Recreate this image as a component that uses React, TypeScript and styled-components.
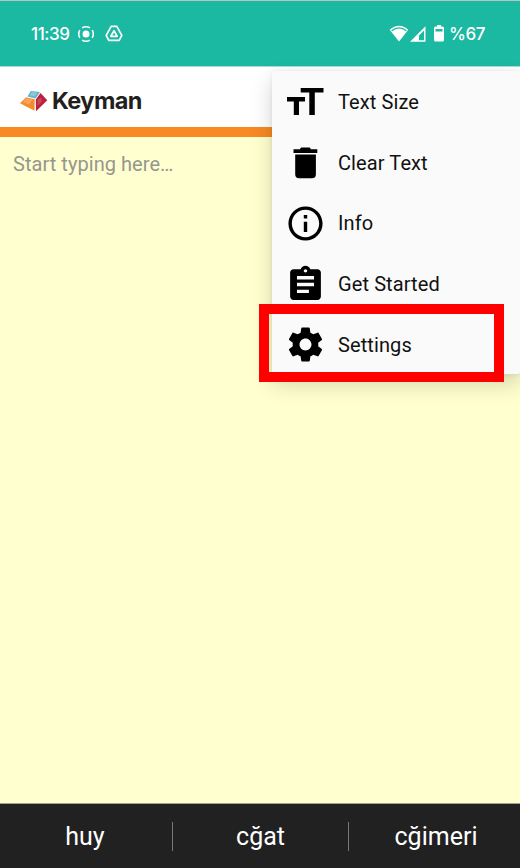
import React from "react";
import styled, { createGlobalStyle } from "styled-components";

const GlobalStyle = createGlobalStyle`
  * { box-sizing: border-box; }
  body { margin: 0; background: #ffffcf; }
  svg { display: block; flex: none; }
`;

const Screen = styled.div`
  position: relative;
  display: flex;
  flex-direction: column;
  width: 520px;
  height: 868px;
  overflow: hidden;
  font-family: Roboto, sans-serif;
`;

const StatusBar = styled.header`
  display: flex;
  justify-content: space-between;
  height: 67px;
  padding: 0 36px 0 31px;
  background: #1bb8a2;
  border-top: 1px solid #bcc4c3;
  border-bottom: 1px solid #a5ded6;
`;

const StatusGroup = styled.div`
  display: flex;
  align-items: center;
  color: #fff;
`;

const StatusText = styled.span<{ $width: number }>`
  width: ${(p) => p.$width}px;
  font: 500 17px/20px Inter, sans-serif;
  letter-spacing: -0.4px;
  white-space: nowrap;
`;

const AppBar = styled.div`
  display: flex;
  align-items: center;
  gap: 4px;
  height: 70px;
  padding: 7px 20px 0;
  background: #fff;
  border-bottom: 10px solid #f88923;
`;

const Brand = styled.span`
  font: 700 23.5px/30px Inter, sans-serif;
  letter-spacing: -0.6px;
  color: #231f20;
`;

const Editor = styled.main`
  flex: 1;
  padding: 15px 13px;
  background: #ffffcf;
  font-size: 20px;
  line-height: 24px;
  letter-spacing: 0.05px;
  color: #96968f;
`;

const Suggestions = styled.footer`
  display: flex;
  align-items: center;
  height: 65px;
  background: #212121;
  border-top: 1px solid #a3a38d;
`;

const Suggestion = styled.div<{ $width: number }>`
  width: ${(p) => p.$width}px;
  flex: none;
  height: 29px;
  padding-right: 2px;
  text-align: center;
  font-size: 25px;
  line-height: 30px;
  color: #fff;

  & + & {
    padding-right: 0;
    border-left: 1px solid #777;
  }
`;

const Menu = styled.nav`
  position: absolute;
  top: 71px;
  left: 272px;
  width: 248px;
  height: 303px;
  padding-top: 1px;
  background: #fafafa;
  border-radius: 2px;
  box-shadow: 0 10px 22px rgba(0, 0, 0, 0.17), 0 0 5px rgba(0, 0, 0, 0.08);
`;

const MenuItem = styled.div`
  display: flex;
  align-items: center;
  gap: 12px;
  height: 60.6px;
  padding-left: 13px;
  font-size: 20px;
  line-height: 24px;
  letter-spacing: 0.1px;
  color: #111;
`;

const Highlight = styled.div`
  position: absolute;
  top: 304px;
  left: 259px;
  width: 245px;
  height: 78px;
  border: 10px solid #f00;
`;

const KeymanLogo = () => (
  <svg width="28" height="22" viewBox="0 0 28 22">
    <path d="M10.700 1 20 2 15.500 8.500 7.500 6.500Z" fill="#63b3cb" />
    <path d="m11.500 2 6 .7-3 3.800-4.500-1Z" fill="#8cc9d8" />
    <path d="M6 7.200 14.700 9.200 14.500 20.700 0 13.300Z" fill="#f68b2c" />
    <path d="m6.500 8 6 1.500-3.500 5-6-2.500Z" fill="#f8a560" />
    <path d="M20.500 3 27.300 10.300 16 21.200 15.800 9.500Z" fill="#b9223b" />
    <path d="m17.500 9.500 3.500-2 1 4-4.500 4.500Z" fill="#ca4557" />
  </svg>
);

const CastIcon = () => (
  <svg width="18" height="18" viewBox="0 0 18 18" fill="none">
    <circle cx="9" cy="9" r="3.5" fill="currentColor" />
    <circle cx="9" cy="9" r="7.3" stroke="currentColor" strokeWidth="1.6" pathLength="100" strokeDasharray="18 7" strokeDashoffset="9" />
  </svg>
);

const DriveIcon = () => (
  <svg width="18" height="17" viewBox="0 0 18 17" fill="none" stroke="currentColor" strokeWidth="1.7" strokeLinejoin="round">
    <path d="M6.2 1.4h5.6l5 9-2.600 5H3.800l-2.600-5Z" />
    <path d="m9 5.800 3.200 5.500H5.800Z" />
  </svg>
);

const WifiIcon = () => (
  <svg width="20" height="17" viewBox="0 0 20 17">
    <path d="M.7 4.700Q10-3.200 19.300 4.700L10 16.500Z" fill="currentColor" />
    <path d="M2.600 5.700Q10-.1 17.400 5.700" fill="none" stroke="#1bb8a2" strokeWidth="1.300" />
  </svg>
);

const SignalIcon = () => (
  <svg width="16" height="16" viewBox="0 0 16 16">
    <path fillRule="evenodd" d="M15.500.3v15.400H0ZM14 4.600 9 9.500v4.700h5Z" fill="currentColor" />
  </svg>
);

const BatteryIcon = () => (
  <svg width="10" height="17" viewBox="0 0 10 17">
    <path fillRule="evenodd" d="M3 0h4v1.500h1.500Q10 1.500 10 3v12q0 1.500-1.500 1.500h-7Q0 16.500 0 15V3q0-1.500 1.500-1.500H3ZM1.500 4V6.500h7V4Z" fill="currentColor" />
  </svg>
);

const TextSizeIcon = () => (
  <svg width="41" height="41" viewBox="0 0 41 41">
    <path d="M15.700 6h22.800v4.500h-8.700V33h-5.500V10.500h-8.600ZM2 15h18v4.500h-6V33H8.800V19.500H2Z" />
  </svg>
);

const TrashIcon = () => (
  <svg width="41" height="41" viewBox="0 0 41 41">
    <path d="M8.500 7.200h6.300l1.300-1.700h8.600L26 7.200h6.300V11H8.500ZM10.200 12.600h20.700v19.700q0 3.900-3.900 3.900H14.100q-3.900 0-3.900-3.900Z" />
  </svg>
);

const iconPaths = {
  info: "M11 7h2v2h-2zm0 4h2v6h-2zm1-9C6.480 2 2 6.480 2 12s4.480 10 10 10 10-4.480 10-10S17.520 2 12 2zm0 18c-4.410 0-8-3.590-8-8s3.590-8 8-8 8 3.590 8 8-3.590 8-8 8z",
  clipboard: "M19 3h-4.180C14.400 1.840 13.300 1 12 1s-2.400.84-2.820 2H5c-1.100 0-2 .9-2 2v14c0 1.100.9 2 2 2h14c1.100 0 2-.9 2-2V5c0-1.100-.9-2-2-2zm-7 0c.55 0 1 .45 1 1s-.45 1-1 1-1-.45-1-1 .45-1 1-1zm2 14H7v-2h7v2zm3-4H7v-2h10v2zm0-4H7V7h10v2z",
  gear: "M19.430 12.980c.04-.32.070-.64.070-.98s-.030-.66-.070-.98l2.110-1.650c.19-.15.240-.42.120-.64l-2-3.460c-.12-.22-.39-.3-.61-.22l-2.490 1c-.52-.4-1.080-.73-1.690-.98l-.38-2.650C14.460 2.180 14.250 2 14 2h-4c-.25 0-.46.180-.49.420l-.38 2.650c-.61.250-1.170.59-1.690.98l-2.490-1c-.23-.09-.49 0-.61.220l-2 3.460c-.13.220-.07.490.12.640l2.110 1.650c-.04.320-.07.650-.07.980s.03.660.07.980l-2.110 1.650c-.19.150-.24.420-.12.640l2 3.460c.12.220.39.300.61.220l2.490-1c.52.400 1.080.730 1.690.980l.38 2.650c.03.240.24.420.49.420h4c.25 0 .46-.18.49-.42l.38-2.650c.61-.25 1.170-.59 1.690-.98l2.490 1c.23.090.49 0 .61-.22l2-3.460c.12-.22.070-.49-.12-.64l-2.110-1.650zM12 15.500c-1.930 0-3.500-1.570-3.500-3.500s1.570-3.500 3.500-3.500 3.500 1.570 3.500 3.500-1.570 3.500-3.500 3.500z",
};

const PathIcon = ({ name }: { name: keyof typeof iconPaths }) => (
  <svg width="41" height="41" viewBox="0 0 24 24">
    <path d={iconPaths[name]} />
  </svg>
);

const menuItems = [
  { label: "Text Size", icon: <TextSizeIcon /> },
  { label: "Clear Text", icon: <TrashIcon /> },
  { label: "Info", icon: <PathIcon name="info" /> },
  { label: "Get Started", icon: <PathIcon name="clipboard" /> },
  { label: "Settings", icon: <PathIcon name="gear" /> },
];

const StartGroup = styled(StatusGroup)`
  svg + svg { margin-left: 10px; }
`;

const EndGroup = styled(StatusGroup)`
  svg + svg { margin-left: 1px; }
  svg + svg + svg { margin-left: 8px; }
  span { margin-left: 5px; }
`;

export default function App() {
  return (
    <>
      <GlobalStyle />
      <Screen>
        <StatusBar>
          <StartGroup>
            <StatusText $width={46}>11:39</StatusText>
            <CastIcon />
            <DriveIcon />
          </StartGroup>
          <EndGroup>
            <WifiIcon />
            <SignalIcon />
            <BatteryIcon />
            <StatusText $width={35}>%67</StatusText>
          </EndGroup>
        </StatusBar>
        <AppBar>
          <KeymanLogo />
          <Brand>Keyman</Brand>
        </AppBar>
        <Editor>Start typing here…</Editor>
        <Suggestions>
          <Suggestion $width={172}>huy</Suggestion>
          <Suggestion $width={176}>cğat</Suggestion>
          <Suggestion $width={175}>cğimeri</Suggestion>
        </Suggestions>
        <Menu>
          {menuItems.map(({ label, icon }) => (
            <MenuItem key={label}>
              {icon}
              {label}
            </MenuItem>
          ))}
        </Menu>
        <Highlight />
      </Screen>
    </>
  );
}
